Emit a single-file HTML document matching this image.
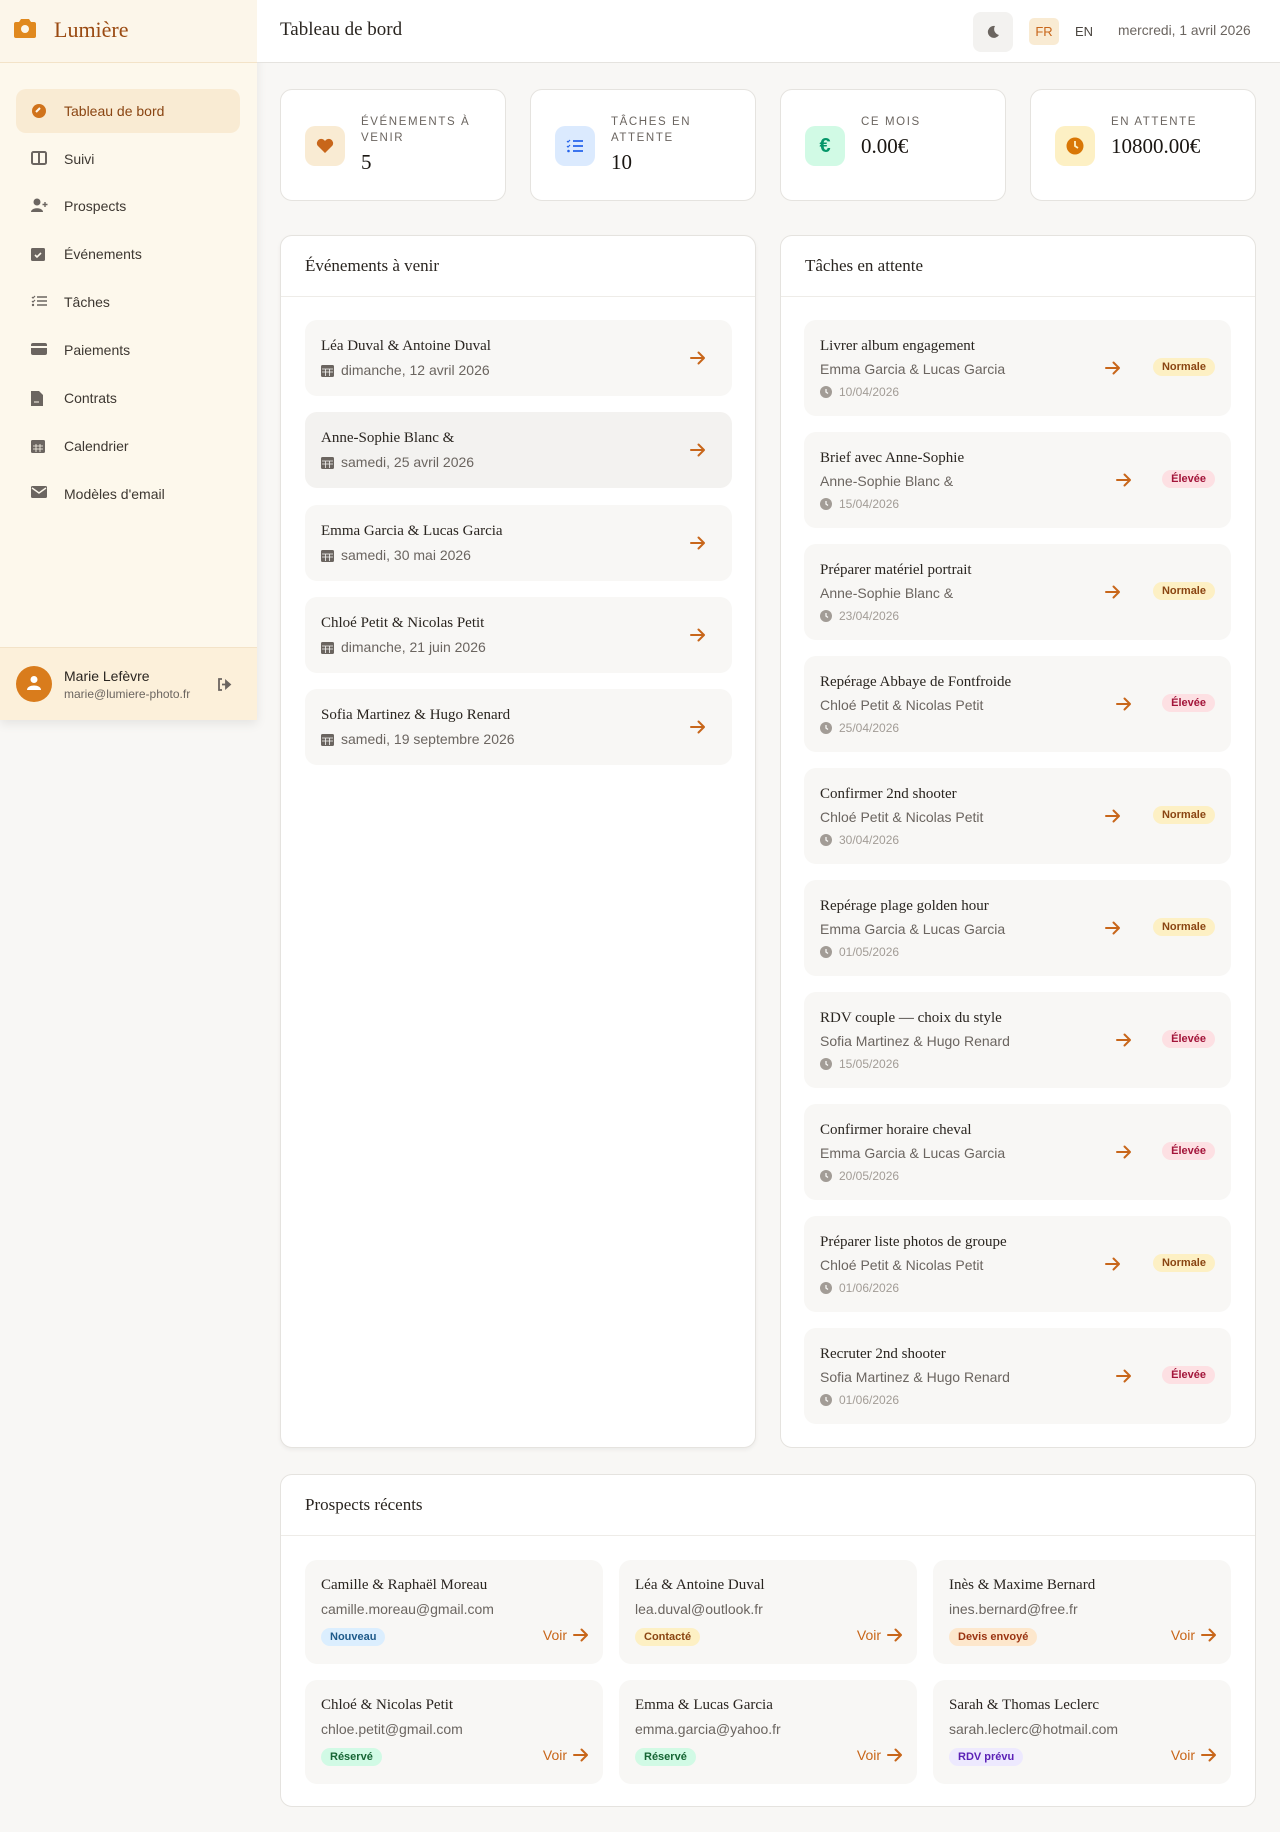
<!DOCTYPE html>
<html><head><meta charset="utf-8"><style>
*{box-sizing:border-box;margin:0;padding:0}
body{width:1280px;height:1832px;background:#f8f7f5;font-family:"Liberation Sans",sans-serif;position:relative;overflow:hidden;color:#2a2520}
.a{position:absolute}
.serif{font-family:"Liberation Serif",serif}
.side{left:0;top:0;width:257px;height:720px;background:#fdf8ec;box-shadow:0 4px 10px rgba(0,0,0,.08)}
.logo{left:0;top:0;width:257px;height:63px;border-bottom:1px solid #f3e3c8;background:#fcf6ea}
.nav{left:16px;width:224px;height:44px;border-radius:10px;font-size:14px;color:#3d3731;display:flex;align-items:center;padding-left:48px}
.nav svg{position:absolute;left:15px;top:14px}
.nav.act{background:#f9ebd3;color:#8a4512}
.hdr{left:257px;top:0;width:1023px;height:63px;background:#fff;border-bottom:1px solid #e5e3df}
.card{background:#fff;border:1px solid #e5e3df;border-radius:12px}
.stat{top:89px;width:226px;height:112px}
.sico{left:24px;top:36px;width:40px;height:40px;border-radius:10px;display:flex;align-items:center;justify-content:center}
.slab{left:80px;top:24px;font-size:11.5px;letter-spacing:1.6px;color:#6b6560;line-height:16px;width:130px}
.sval{left:80px;font-size:21px;font-weight:normal;color:#1a1612}
.ph{font-size:17px;color:#2a2520}
.ev{left:24px;width:427px;height:76px;background:#f8f7f5;border-radius:12px}
.ev .t{left:16px;top:18px;font-size:15px}
.ev .d{left:16px;top:42px;font-size:14px;color:#6b6560;display:flex;align-items:center;gap:7px}
.arr{width:16px;height:14px}
.tk{left:24px;width:427px;height:96px;background:#f8f7f5;border-radius:12px}
.tk .t{left:16px;top:18px;font-size:15px}
.tk .s{left:16px;top:41px;font-size:14px;color:#6b6560}
.tk .d{left:16px;top:65px;font-size:12px;color:#a29c96;display:flex;align-items:center;gap:7px}
.pill{font-size:11px;font-weight:bold;padding:3px 9px;border-radius:10px}
.norm{background:#fdf0c4;color:#8a4512}
.elev{background:#fde0e3;color:#a3153a}
.pc{width:298px;height:104px;background:#f8f7f5;border-radius:12px}
.pc .t{left:16px;top:17px;font-size:15px}
.pc .e{left:16px;top:41px;font-size:14px;color:#6b6560}
.pc .b{left:16px;top:68px}
.pc .v{right:14px;top:67px;font-size:14px;color:#c8661a;display:flex;align-items:center;gap:6px}
</style></head><body>
<svg width="0" height="0" style="position:absolute"><defs><symbol id="ar" viewBox="0 0 16 14"><path d="M1 7h13M8.5 1.5L14 7l-5.5 5.5" stroke="#c8661a" stroke-width="2" fill="none" stroke-linecap="round" stroke-linejoin="round"/></symbol></defs></svg>

<div class="a side">
 <div class="a logo">
  <svg class="a" style="left:14px;top:18px" width="22" height="20" viewBox="0 0 22 20"><path d="M7 1h8l2 3h3a2 2 0 0 1 2 2v12a2 2 0 0 1-2 2H2a2 2 0 0 1-2-2V6a2 2 0 0 1 2-2h3z" fill="#e0891f"/><circle cx="11" cy="11" r="4" fill="#fcf6ea"/></svg>
  <div class="a serif" style="left:54px;top:17px;font-size:22px;color:#9a4a12">Lumière</div>
 </div>
 <div class="a nav act" style="top:89px"><svg width="16" height="16" viewBox="0 0 16 16"><circle cx="8" cy="8" r="7" fill="#d0731c"/><path d="M5 9l4-4M8 11h0" stroke="#fdf8ec" stroke-width="2"/></svg>Tableau de bord</div>
 <div class="a nav" style="top:137px"><svg width="16" height="14"><rect x="1" y="1" width="14" height="12" rx="1.5" fill="none" stroke="#6b6560" stroke-width="2"/><path d="M8 1v12" stroke="#6b6560" stroke-width="2"/></svg>Suivi</div>
 <div class="a nav" style="top:184px"><svg width="18" height="16"><circle cx="6" cy="4" r="3.5" fill="#6b6560"/><path d="M0 14c0-5 12-5 12 0z" fill="#6b6560"/><path d="M14 4v5M11.5 6.5h5" stroke="#6b6560" stroke-width="1.4"/></svg>Prospects</div>
 <div class="a nav" style="top:232px"><svg width="14" height="16"><rect x="0" y="2" width="14" height="13" rx="1.5" fill="#6b6560"/><path d="M4 9l2 2 4-4" stroke="#fdf8ec" stroke-width="1.6" fill="none"/></svg>Événements</div>
 <div class="a nav" style="top:280px"><svg width="16" height="14"><path d="M6 3h10M6 7h10M6 11h10" stroke="#6b6560" stroke-width="1.6"/><path d="M1 3l1 1 2-2M1 7l1 1 2-2" stroke="#6b6560" stroke-width="1.2" fill="none"/><circle cx="2" cy="11" r="1.2" fill="#6b6560"/></svg>Tâches</div>
 <div class="a nav" style="top:328px"><svg width="16" height="14"><rect x="0" y="1" width="16" height="12" rx="2" fill="#6b6560"/><rect x="0" y="4" width="16" height="2" fill="#fdf8ec"/></svg>Paiements</div>
 <div class="a nav" style="top:376px"><svg width="12" height="16"><path d="M0 1h8l4 4v11H0z" fill="#6b6560"/><path d="M3 12h5" stroke="#fdf8ec"/></svg>Contrats</div>
 <div class="a nav" style="top:424px"><svg width="14" height="16"><rect x="0" y="2" width="14" height="13" rx="1.5" fill="#6b6560"/><path d="M2 8h10M2 11h10M5 6v8M9 6v8" stroke="#fdf8ec" stroke-width=".8"/></svg>Calendrier</div>
 <div class="a nav" style="top:472px"><svg width="16" height="12"><rect x="0" y="0" width="16" height="12" rx="1.5" fill="#6b6560"/><path d="M1 2l7 5 7-5" stroke="#fdf8ec" stroke-width="1.4" fill="none"/></svg>Modèles d'email</div>
 <div class="a" style="left:0;top:647px;width:257px;height:73px;background:#fcf0da;border-top:1px solid #f3e3c8">
  <div class="a" style="left:16px;top:18px;width:36px;height:36px;border-radius:50%;background:#d97c1c"><svg class="a" style="left:11px;top:9px" width="14" height="16"><circle cx="7" cy="4.5" r="3.5" fill="#fff"/><path d="M0 15c0-6 14-6 14 0z" fill="#fff"/></svg></div>
  <div class="a" style="left:64px;top:20px;font-size:14px;color:#2a2520">Marie Lefèvre</div>
  <div class="a" style="left:64px;top:39px;font-size:12px;color:#6b6560">marie@lumiere-photo.fr</div>
  <svg class="a" style="left:217px;top:30px" width="15" height="13"><path d="M5 1H2v11h3" stroke="#6b6560" stroke-width="1.8" fill="none"/><path d="M5 6.5h6M9 3l4 3.5L9 10z" stroke="#6b6560" stroke-width="1.8" fill="#6b6560"/></svg>
 </div>
</div>

<div class="a hdr">
 <div class="a serif" style="left:23px;top:19px;font-size:19px;color:#2a2520">Tableau de bord</div>
 <div class="a" style="left:716px;top:12px;width:40px;height:40px;border-radius:8px;background:#f3f2f0"><svg class="a" style="left:13px;top:13px" width="14" height="14"><path d="M9 1a6 6 0 1 0 4 9A6 6 0 0 1 9 1z" fill="#6b6560"/></svg></div>
 <div class="a" style="left:772px;top:18px;width:30px;height:27px;border-radius:5px;background:#f9ebd3;color:#c8661a;font-size:13px;text-align:center;line-height:27px">FR</div>
 <div class="a" style="left:818px;top:24px;font-size:13px;color:#4a4540">EN</div>
 <div class="a" style="left:861px;top:23px;font-size:13.8px;color:#6b6560">mercredi, 1 avril 2026</div>
</div>

<div class="a card stat" style="left:280px"><div class="a sico" style="background:#f9ebd3"><svg width="18" height="16"><path d="M9 15L1.5 7.5A4 4 0 0 1 9 3a4 4 0 0 1 7.5 4.5z" fill="#c8661a"/></svg></div><div class="a slab">ÉVÉNEMENTS À VENIR</div><div class="a sval serif" style="top:60px">5</div></div>
<div class="a card stat" style="left:530px"><div class="a sico" style="background:#dbeafe"><svg width="18" height="16"><path d="M7 3h10M7 8h10M7 13h10" stroke="#2563eb" stroke-width="1.8"/><path d="M1 3l1 1 2-2M1 8l1 1 2-2" stroke="#2563eb" stroke-width="1.2" fill="none"/><circle cx="2.5" cy="13" r="1.3" fill="#2563eb"/></svg></div><div class="a slab">TÂCHES EN ATTENTE</div><div class="a sval serif" style="top:60px">10</div></div>
<div class="a card stat" style="left:780px"><div class="a sico" style="background:#d1fae5;color:#059669;font-size:20px;font-weight:bold">€</div><div class="a slab">CE MOIS</div><div class="a sval serif" style="top:44px">0.00€</div></div>
<div class="a card stat" style="left:1030px"><div class="a sico" style="background:#fdf0c4"><svg width="18" height="18"><circle cx="9" cy="9" r="8.5" fill="#d97706"/><path d="M9 4v5l3 2" stroke="#fdf0c4" stroke-width="1.8" fill="none"/></svg></div><div class="a slab">EN ATTENTE</div><div class="a sval serif" style="top:44px">10800.00€</div></div>

<div class="a card" style="left:280px;top:235px;width:476px;height:1213px;box-shadow:0 2px 4px rgba(0,0,0,.05)">
 <div class="a serif ph" style="left:24px;top:20px">Événements à venir</div>
 <div class="a" style="left:0;top:60px;width:100%;border-top:1px solid #eeece8"></div>
 <div class="a ev" style="top:84px"><div class="a t serif">Léa Duval &amp; Antoine Duval</div><div class="a d"><svg width="13" height="13"><rect y="1" width="13" height="12" rx="1.5" fill="#6b6560"/><path d="M1 5h11M1 8h11M4.5 5v7M8.5 5v7" stroke="#f8f7f5" stroke-width=".8"/></svg>dimanche, 12 avril 2026</div><svg class="a arr" style="right:26px;top:31px"><use href="#ar"/></svg></div>
 <div class="a ev" style="top:176px;background:#f3f2f0"><div class="a t serif">Anne-Sophie Blanc &amp;</div><div class="a d"><svg width="13" height="13"><rect y="1" width="13" height="12" rx="1.5" fill="#6b6560"/><path d="M1 5h11M1 8h11M4.5 5v7M8.5 5v7" stroke="#f3f2f0" stroke-width=".8"/></svg>samedi, 25 avril 2026</div><svg class="a arr" style="right:26px;top:31px"><use href="#ar"/></svg></div>
 <div class="a ev" style="top:269px"><div class="a t serif">Emma Garcia &amp; Lucas Garcia</div><div class="a d"><svg width="13" height="13"><rect y="1" width="13" height="12" rx="1.5" fill="#6b6560"/><path d="M1 5h11M1 8h11M4.5 5v7M8.5 5v7" stroke="#f8f7f5" stroke-width=".8"/></svg>samedi, 30 mai 2026</div><svg class="a arr" style="right:26px;top:31px"><use href="#ar"/></svg></div>
 <div class="a ev" style="top:361px"><div class="a t serif">Chloé Petit &amp; Nicolas Petit</div><div class="a d"><svg width="13" height="13"><rect y="1" width="13" height="12" rx="1.5" fill="#6b6560"/><path d="M1 5h11M1 8h11M4.5 5v7M8.5 5v7" stroke="#f8f7f5" stroke-width=".8"/></svg>dimanche, 21 juin 2026</div><svg class="a arr" style="right:26px;top:31px"><use href="#ar"/></svg></div>
 <div class="a ev" style="top:453px"><div class="a t serif">Sofia Martinez &amp; Hugo Renard</div><div class="a d"><svg width="13" height="13"><rect y="1" width="13" height="12" rx="1.5" fill="#6b6560"/><path d="M1 5h11M1 8h11M4.5 5v7M8.5 5v7" stroke="#f8f7f5" stroke-width=".8"/></svg>samedi, 19 septembre 2026</div><svg class="a arr" style="right:26px;top:31px"><use href="#ar"/></svg></div>
</div>

<div class="a card" style="left:780px;top:235px;width:476px;height:1213px">
 <div class="a serif ph" style="left:24px;top:20px">Tâches en attente</div>
 <div class="a" style="left:0;top:60px;width:100%;border-top:1px solid #eeece8"></div>
</div>

<div class="a card" style="left:280px;top:1474px;width:976px;height:333px">
 <div class="a serif ph" style="left:24px;top:20px">Prospects récents</div>
 <div class="a" style="left:0;top:60px;width:100%;border-top:1px solid #eeece8"></div>
 <div class="a pc" style="left:24px;top:85px"><div class="a t serif">Camille &amp; Raphaël Moreau</div><div class="a e">camille.moreau@gmail.com</div><div class="a b pill" style="background:#dbeefe;color:#1e5a8a">Nouveau</div><div class="a v">Voir <svg class="arr"><use href="#ar"/></svg></div></div>
 <div class="a pc" style="left:338px;top:85px"><div class="a t serif">Léa &amp; Antoine Duval</div><div class="a e">lea.duval@outlook.fr</div><div class="a b pill norm">Contacté</div><div class="a v">Voir <svg class="arr"><use href="#ar"/></svg></div></div>
 <div class="a pc" style="left:652px;top:85px"><div class="a t serif">Inès &amp; Maxime Bernard</div><div class="a e">ines.bernard@free.fr</div><div class="a b pill" style="background:#fde7cc;color:#9a3412">Devis envoyé</div><div class="a v">Voir <svg class="arr"><use href="#ar"/></svg></div></div>
 <div class="a pc" style="left:24px;top:205px"><div class="a t serif">Chloé &amp; Nicolas Petit</div><div class="a e">chloe.petit@gmail.com</div><div class="a b pill" style="background:#d1fae5;color:#166534">Réservé</div><div class="a v">Voir <svg class="arr"><use href="#ar"/></svg></div></div>
 <div class="a pc" style="left:338px;top:205px"><div class="a t serif">Emma &amp; Lucas Garcia</div><div class="a e">emma.garcia@yahoo.fr</div><div class="a b pill" style="background:#d1fae5;color:#166534">Réservé</div><div class="a v">Voir <svg class="arr"><use href="#ar"/></svg></div></div>
 <div class="a pc" style="left:652px;top:205px"><div class="a t serif">Sarah &amp; Thomas Leclerc</div><div class="a e">sarah.leclerc@hotmail.com</div><div class="a b pill" style="background:#ede9fe;color:#5b21b6">RDV prévu</div><div class="a v">Voir <svg class="arr"><use href="#ar"/></svg></div></div>
</div>

<div class="a" style="left:780px;top:235px;width:476px;height:1213px">
 <div class="a tk" style="top:85px"><div class="a t serif">Livrer album engagement</div><div class="a s">Emma Garcia &amp; Lucas Garcia</div><div class="a d"><svg width="12" height="12"><circle cx="6" cy="6" r="6" fill="#a29c96"/><path d="M6 3v3l2 1.5" stroke="#f8f7f5" stroke-width="1.3" fill="none"/></svg>10/04/2026</div><svg class="a arr" style="right:110px;top:41px"><use href="#ar"/></svg><div class="a pill norm" style="right:16px;top:38px">Normale</div></div>
 <div class="a tk" style="top:197px"><div class="a t serif">Brief avec Anne-Sophie</div><div class="a s">Anne-Sophie Blanc &amp;</div><div class="a d"><svg width="12" height="12"><circle cx="6" cy="6" r="6" fill="#a29c96"/><path d="M6 3v3l2 1.5" stroke="#f8f7f5" stroke-width="1.3" fill="none"/></svg>15/04/2026</div><svg class="a arr" style="right:99px;top:41px"><use href="#ar"/></svg><div class="a pill elev" style="right:16px;top:38px">Élevée</div></div>
 <div class="a tk" style="top:309px"><div class="a t serif">Préparer matériel portrait</div><div class="a s">Anne-Sophie Blanc &amp;</div><div class="a d"><svg width="12" height="12"><circle cx="6" cy="6" r="6" fill="#a29c96"/><path d="M6 3v3l2 1.5" stroke="#f8f7f5" stroke-width="1.3" fill="none"/></svg>23/04/2026</div><svg class="a arr" style="right:110px;top:41px"><use href="#ar"/></svg><div class="a pill norm" style="right:16px;top:38px">Normale</div></div>
 <div class="a tk" style="top:421px"><div class="a t serif">Repérage Abbaye de Fontfroide</div><div class="a s">Chloé Petit &amp; Nicolas Petit</div><div class="a d"><svg width="12" height="12"><circle cx="6" cy="6" r="6" fill="#a29c96"/><path d="M6 3v3l2 1.5" stroke="#f8f7f5" stroke-width="1.3" fill="none"/></svg>25/04/2026</div><svg class="a arr" style="right:99px;top:41px"><use href="#ar"/></svg><div class="a pill elev" style="right:16px;top:38px">Élevée</div></div>
 <div class="a tk" style="top:533px"><div class="a t serif">Confirmer 2nd shooter</div><div class="a s">Chloé Petit &amp; Nicolas Petit</div><div class="a d"><svg width="12" height="12"><circle cx="6" cy="6" r="6" fill="#a29c96"/><path d="M6 3v3l2 1.5" stroke="#f8f7f5" stroke-width="1.3" fill="none"/></svg>30/04/2026</div><svg class="a arr" style="right:110px;top:41px"><use href="#ar"/></svg><div class="a pill norm" style="right:16px;top:38px">Normale</div></div>
 <div class="a tk" style="top:645px"><div class="a t serif">Repérage plage golden hour</div><div class="a s">Emma Garcia &amp; Lucas Garcia</div><div class="a d"><svg width="12" height="12"><circle cx="6" cy="6" r="6" fill="#a29c96"/><path d="M6 3v3l2 1.5" stroke="#f8f7f5" stroke-width="1.3" fill="none"/></svg>01/05/2026</div><svg class="a arr" style="right:110px;top:41px"><use href="#ar"/></svg><div class="a pill norm" style="right:16px;top:38px">Normale</div></div>
 <div class="a tk" style="top:757px"><div class="a t serif">RDV couple — choix du style</div><div class="a s">Sofia Martinez &amp; Hugo Renard</div><div class="a d"><svg width="12" height="12"><circle cx="6" cy="6" r="6" fill="#a29c96"/><path d="M6 3v3l2 1.5" stroke="#f8f7f5" stroke-width="1.3" fill="none"/></svg>15/05/2026</div><svg class="a arr" style="right:99px;top:41px"><use href="#ar"/></svg><div class="a pill elev" style="right:16px;top:38px">Élevée</div></div>
 <div class="a tk" style="top:869px"><div class="a t serif">Confirmer horaire cheval</div><div class="a s">Emma Garcia &amp; Lucas Garcia</div><div class="a d"><svg width="12" height="12"><circle cx="6" cy="6" r="6" fill="#a29c96"/><path d="M6 3v3l2 1.5" stroke="#f8f7f5" stroke-width="1.3" fill="none"/></svg>20/05/2026</div><svg class="a arr" style="right:99px;top:41px"><use href="#ar"/></svg><div class="a pill elev" style="right:16px;top:38px">Élevée</div></div>
 <div class="a tk" style="top:981px"><div class="a t serif">Préparer liste photos de groupe</div><div class="a s">Chloé Petit &amp; Nicolas Petit</div><div class="a d"><svg width="12" height="12"><circle cx="6" cy="6" r="6" fill="#a29c96"/><path d="M6 3v3l2 1.5" stroke="#f8f7f5" stroke-width="1.3" fill="none"/></svg>01/06/2026</div><svg class="a arr" style="right:110px;top:41px"><use href="#ar"/></svg><div class="a pill norm" style="right:16px;top:38px">Normale</div></div>
 <div class="a tk" style="top:1093px"><div class="a t serif">Recruter 2nd shooter</div><div class="a s">Sofia Martinez &amp; Hugo Renard</div><div class="a d"><svg width="12" height="12"><circle cx="6" cy="6" r="6" fill="#a29c96"/><path d="M6 3v3l2 1.5" stroke="#f8f7f5" stroke-width="1.3" fill="none"/></svg>01/06/2026</div><svg class="a arr" style="right:99px;top:41px"><use href="#ar"/></svg><div class="a pill elev" style="right:16px;top:38px">Élevée</div></div>
</div>
</body></html>
